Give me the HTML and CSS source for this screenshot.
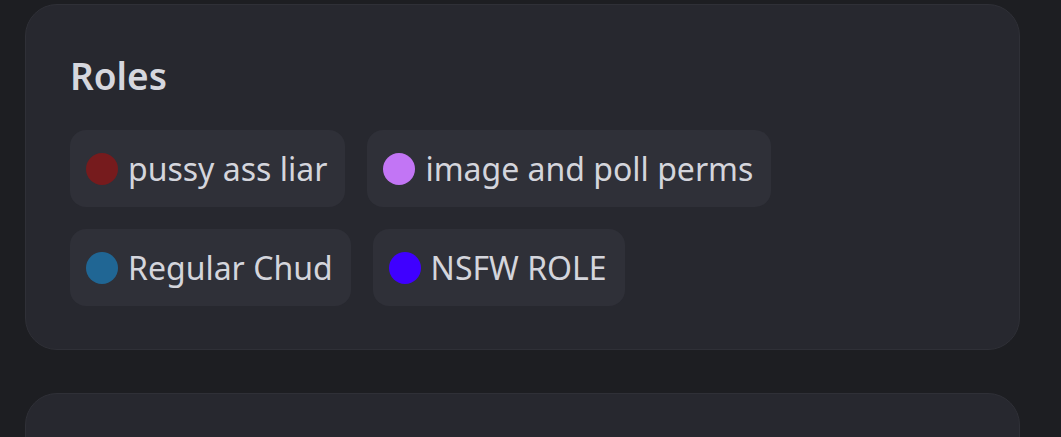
FILE: index.html
```html
<!DOCTYPE html>
<html>
<head>
<meta charset="utf-8">
<link rel="stylesheet" href="styles.css">
</head>
<body>
<div class="page">
  <section class="card">
    <h2 class="title">Roles</h2>
    <div class="roles">
      <div class="role"><span class="dot dot-red"></span><span class="name">pussy ass liar</span></div>
      <div class="role"><span class="dot dot-purple"></span><span class="name">image and poll perms</span></div>
      <div class="role"><span class="dot dot-blue"></span><span class="name">Regular Chud</span></div>
      <div class="role"><span class="dot dot-indigo"></span><span class="name">NSFW ROLE</span></div>
    </div>
  </section>
  <section class="card card-next"></section>
</div>
</body>
</html>
```

FILE: styles.css
```css
html, body {
  margin: 0;
  padding: 0;
  background: #1d1e22;
  height: 100%;
  overflow: hidden;
}
.page {
  padding: 4px 41px 0 25px;
  display: flex;
  flex-direction: column;
  gap: 43px;
  font-family: "Noto Sans", "Open Sans", sans-serif;
}
.card {
  background: #27282f;
  border: 1px solid #2f3037;
  border-radius: 32px;
  padding: 51px 44px 43px;
}
.card-next {
  height: 200px;
}
.title {
  margin: 0 0 34px;
  font-size: 37px;
  line-height: 40px;
  font-weight: 600;
  color: #d6d7de;
}
.roles {
  display: flex;
  flex-wrap: wrap;
  width: 720px;
  gap: 22px 22px;
}
.role {
  display: flex;
  align-items: center;
  height: 77px;
  box-sizing: border-box;
  padding: 0 18px 0 16px;
  background: #2f3038;
  border-radius: 16px;
}
.dot {
  width: 32px;
  height: 32px;
  border-radius: 50%;
  margin-right: 10px;
  flex: none;
}
.dot-red { background: #761b1d; }
.dot-purple { background: #c275f5; }
.dot-blue { background: #206694; }
.dot-indigo { background: #3f00ff; }
.name {
  font-size: 32px;
  color: #d4d5dc;
  line-height: 40px;
}
```
